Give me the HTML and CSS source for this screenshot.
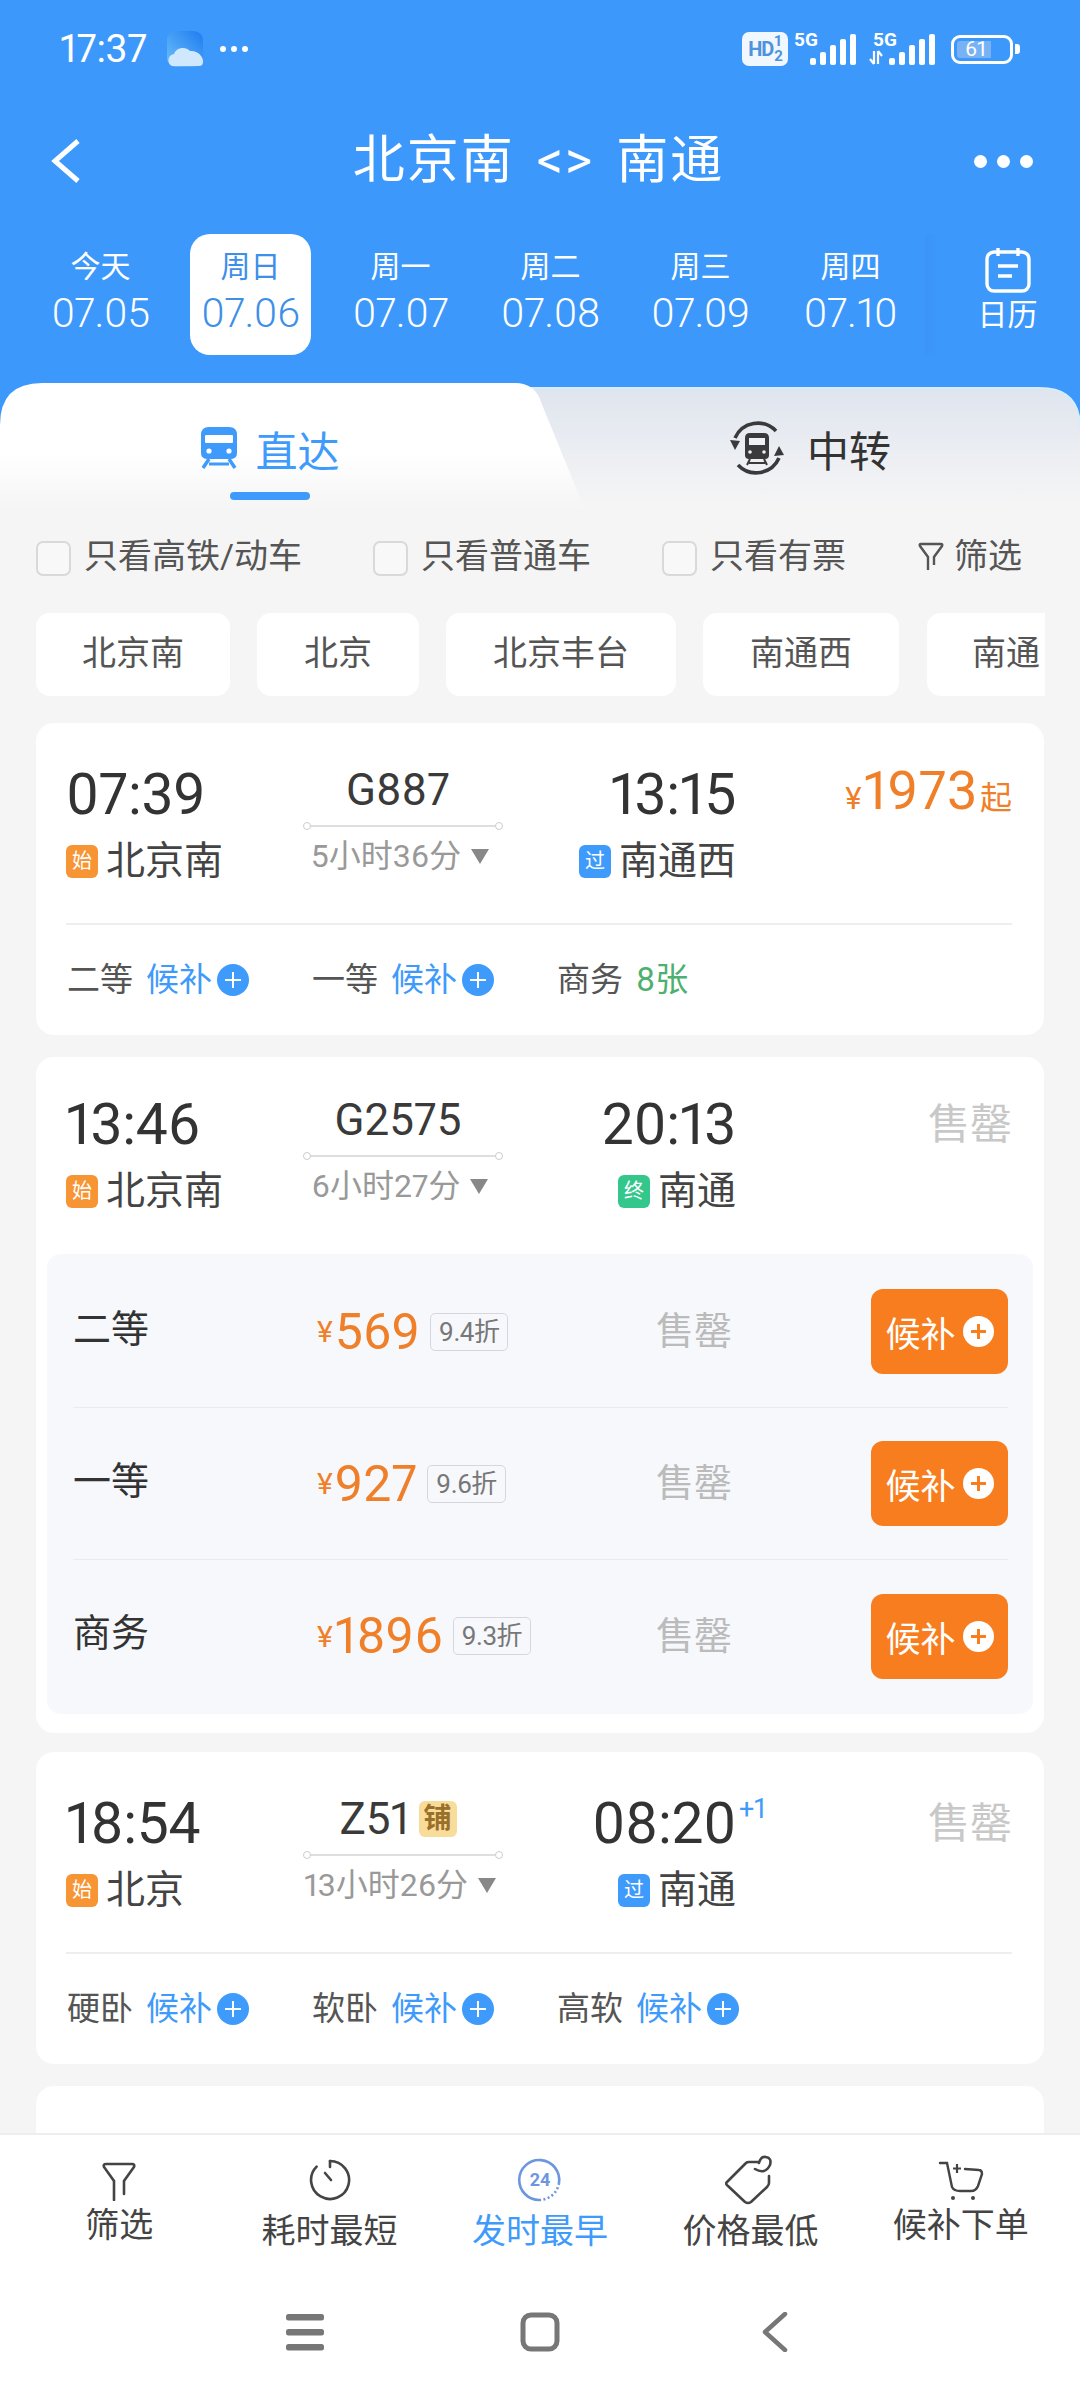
FILE: index.html
```html
<!DOCTYPE html>
<html lang="zh-CN">
<head>
<meta charset="utf-8">
<title>北京南 &lt;&gt; 南通</title>
<link rel="stylesheet" href="styles.css">
</head>
<body>
<div class="app">
  <header class="header">
    <div class="status">
      <span class="clock">17:37</span>
      <svg class="weather" viewBox="0 0 36 36" width="36" height="36">
        <defs><linearGradient id="wg" x1="1" y1="0" x2="0" y2="1"><stop offset="0" stop-color="#1e7cf0"/><stop offset="1" stop-color="#6cc0fa"/></linearGradient></defs>
        <rect width="36" height="36" rx="9" fill="url(#wg)"/>
        <path d="M5 35C0 33 0 24 7 23C9 16 19 15 23 20C30 19 36 25 36 30V31Q36 35 32 35Z" fill="#cfe8fd"/>
      </svg>
      <span class="more-dots"><i></i><i></i><i></i></span>
      <span class="status-right">
        <span class="hd"><b>HD</b><span class="hd-frac"><b>1</b><b>2</b></span></span>
        <svg class="signal" viewBox="0 -8 64 44" width="64" height="44">
          <text x="0" y="15" class="sig-text">5G</text>
          <rect x="16" y="27" width="6" height="7" rx="2" fill="#fff"/><rect x="26" y="21" width="6" height="13" rx="2" fill="#fff"/><rect x="36" y="14" width="6" height="20" rx="2" fill="#fff"/><rect x="46" y="8" width="6" height="26" rx="2" fill="#fff"/><rect x="56" y="3" width="6" height="31" rx="2" fill="#fff"/>
        </svg>
        <svg class="signal signal-two" viewBox="0 -8 68 44" width="68" height="44">
          <text x="4" y="15" class="sig-text">5G</text>
          <path d="M5 20V33M1 28L5 33M9 20V33M9 20L13 25" stroke="#fff" stroke-width="2.2" fill="none"/>
          <rect x="20" y="27" width="6" height="7" rx="2" fill="#fff"/><rect x="30" y="21" width="6" height="13" rx="2" fill="#fff"/><rect x="40" y="14" width="6" height="20" rx="2" fill="#fff"/><rect x="50" y="8" width="6" height="26" rx="2" fill="#fff"/><rect x="60" y="3" width="6" height="31" rx="2" fill="#fff"/>
        </svg>
        <span class="battery"><span class="battery-level">61</span></span><span class="battery-nub"></span>
      </span>
    </div>
    <div class="titlebar">
      <svg class="back" viewBox="0 0 30 44" width="30" height="44"><path d="M27 2L4 22L27 42" fill="none" stroke="#fff" stroke-width="5"/></svg>
      <h1 class="title">北京南 &lt;&gt; 南通</h1>
      <span class="title-more"><i></i><i></i><i></i></span>
    </div>
    <div class="dates">
      <div class="date"><span class="date-w">今天</span><span class="date-d">07.05</span></div>
      <div class="date date-on"><span class="date-w">周日</span><span class="date-d">07.06</span></div>
      <div class="date"><span class="date-w">周一</span><span class="date-d">07.07</span></div>
      <div class="date"><span class="date-w">周二</span><span class="date-d">07.08</span></div>
      <div class="date"><span class="date-w">周三</span><span class="date-d">07.09</span></div>
      <div class="date"><span class="date-w">周四</span><span class="date-d">07.10</span></div>
      <div class="cal">
        <svg viewBox="0 0 46 46" width="46" height="46"><rect x="2" y="5" width="42" height="39" rx="7" fill="none" stroke="#fff" stroke-width="3.4"/><path d="M13 1V9M33 1V9" stroke="#fff" stroke-width="3.4"/><path d="M13 19H33M13 29H27" stroke="#fff" stroke-width="3.4"/></svg>
        <span class="cal-label">日历</span>
      </div>
    </div>
  </header>

  <div class="tabs">
    <svg class="tabs-bg" viewBox="0 0 1080 130" width="1080" height="130">
      <defs>
        <linearGradient id="tl" x1="0" y1="0" x2="0" y2="1"><stop offset=".55" stop-color="#fff"/><stop offset=".95" stop-color="#f6f6f7"/></linearGradient>
        <linearGradient id="tr" x1="0" y1="0" x2="0" y2="1"><stop offset="0" stop-color="#dfe5ee"/><stop offset=".95" stop-color="#f5f5f6"/></linearGradient>
      </defs>
      <rect width="1080" height="50" fill="#3d98fc"/>
      <path d="M500 8H1040Q1080 8 1080 48V130H500Z" fill="url(#tr)"/>
      <path d="M500 8H1040Q1080 8 1080 48" fill="none" stroke="#d5ecfb" stroke-width="2"/>
      <path d="M0 130V45Q0 3 42 3H515Q535 3 541 22L585 130Z" fill="url(#tl)"/>
    </svg>
    <div class="tab tab-on">
      <div class="tab-main">
        <svg viewBox="0 0 38 42" width="38" height="42"><path d="M9 0H29Q37 0 37 8V26Q37 32 30 32H8Q1 32 1 26V8Q1 0 9 0Z" fill="#3f9bfb"/><rect x="5" y="8" width="28" height="8" rx="1" fill="#fff"/><circle cx="9" cy="24" r="2.6" fill="#fff"/><circle cx="29" cy="24" r="2.6" fill="#fff"/><path d="M9 32L3 41M29 32L35 41" stroke="#3f9bfb" stroke-width="3.5"/><path d="M9 37H29" stroke="#3f9bfb" stroke-width="3"/></svg>
        <span>直达</span>
      </div>
      <i class="tab-bar"></i>
    </div>
    <div class="tab">
      <div class="tab-main tab-main-gap">
        <svg viewBox="0 0 56 56" width="56" height="56"><path d="M6 18A25 25 0 0 1 47 11" fill="none" stroke="#3a3a3c" stroke-width="3.6"/><path d="M50 38A25 25 0 0 1 9 45" fill="none" stroke="#3a3a3c" stroke-width="3.6"/><path d="M1 20L6 30L11 21Z" fill="#3a3a3c"/><path d="M45 36L50 26L55 35Z" fill="#3a3a3c"/><path d="M21 13H35Q40 13 40 18V35Q40 39 36 39H20Q16 39 16 35V18Q16 13 21 13Z" fill="#3a3a3c"/><rect x="20" y="18" width="16" height="7" fill="#eef1f5"/><circle cx="21" cy="32" r="1.8" fill="#eef1f5"/><circle cx="35" cy="32" r="1.8" fill="#eef1f5"/><path d="M21 39L18 45M35 39L38 45M20 43H36" stroke="#3a3a3c" stroke-width="2"/></svg>
        <span class="tab-dark">中转</span>
      </div>
      <i class="tab-bar tab-bar-off"></i>
    </div>
  </div>

  <div class="filters">
    <label class="check"><i class="box"></i>只看高铁/动车</label>
    <label class="check"><i class="box"></i>只看普通车</label>
    <label class="check"><i class="box"></i>只看有票</label>
    <span class="filter-btn"><svg viewBox="0 0 28 30" width="28" height="30"><path d="M11 29V16L3 5Q2 3 4 3H24Q26 3 25 5L17 16V24" fill="none" stroke="#555" stroke-width="2.4"/></svg>筛选</span>
  </div>

  <div class="chips">
    <span class="chip">北京南</span><span class="chip">北京</span><span class="chip">北京丰台</span><span class="chip">南通西</span><span class="chip">南通</span>
  </div>

  <main class="list">
    <section class="card">
      <div class="trip">
        <div class="col-dep"><div class="time">07:39</div><div class="station"><i class="st st-o">始</i>北京南</div></div>
        <div class="col-mid"><div class="no">G887</div><div class="rail"><i></i></div><div class="dur">5小时36分<i class="tri"></i></div></div>
        <div class="col-arr"><div class="time">13:15</div><div class="station"><i class="st st-b">过</i>南通西</div></div>
        <div class="col-price"><span class="yen">¥</span><span class="amt amt-big">1973</span><span class="qi">起</span></div>
      </div>
      <div class="seats">
        <div class="seat">二等<span class="wait">候补</span><i class="plus"></i></div>
        <div class="seat">一等<span class="wait">候补</span><i class="plus"></i></div>
        <div class="seat">商务<span class="left">8张</span></div>
      </div>
    </section>

    <section class="card card-open">
      <div class="trip trip-open">
        <div class="col-dep"><div class="time">13:46</div><div class="station"><i class="st st-o">始</i>北京南</div></div>
        <div class="col-mid"><div class="no">G2575</div><div class="rail"><i></i></div><div class="dur">6小时27分<i class="tri"></i></div></div>
        <div class="col-arr"><div class="time">20:13</div><div class="station"><i class="st st-g">终</i>南通</div></div>
        <div class="col-price"><span class="sold">售罄</span></div>
      </div>
      <div class="panel">
        <div class="prow"><span class="pclass">二等</span><span class="pprice"><span class="pyen">¥</span><span class="amt">569</span><span class="disc">9.4折</span></span><span class="psold">售罄</span><span class="btn">候补<i class="plus plus-w"></i></span></div>
        <div class="prow"><span class="pclass">一等</span><span class="pprice"><span class="pyen">¥</span><span class="amt">927</span><span class="disc">9.6折</span></span><span class="psold">售罄</span><span class="btn">候补<i class="plus plus-w"></i></span></div>
        <div class="prow"><span class="pclass">商务</span><span class="pprice"><span class="pyen">¥</span><span class="amt">1896</span><span class="disc">9.3折</span></span><span class="psold">售罄</span><span class="btn">候补<i class="plus plus-w"></i></span></div>
      </div>
    </section>

    <section class="card">
      <div class="trip">
        <div class="col-dep"><div class="time">18:54</div><div class="station"><i class="st st-o">始</i>北京</div></div>
        <div class="col-mid"><div class="no">Z51<i class="pu">铺</i></div><div class="rail"><i></i></div><div class="dur">13小时26分<i class="tri"></i></div></div>
        <div class="col-arr"><div class="time">08:20<sup class="plus-day">+1</sup></div><div class="station"><i class="st st-b">过</i>南通</div></div>
        <div class="col-price"><span class="sold">售罄</span></div>
      </div>
      <div class="seats">
        <div class="seat">硬卧<span class="wait">候补</span><i class="plus"></i></div>
        <div class="seat">软卧<span class="wait">候补</span><i class="plus"></i></div>
        <div class="seat">高软<span class="wait">候补</span><i class="plus"></i></div>
      </div>
    </section>

    <section class="card"></section>
  </main>

  <nav class="tabbar">
    <div class="nav nav-up">
      <span class="nav-ic"><svg viewBox="0 0 36 42" width="36" height="42"><path d="M13 41V22L3 8Q2 5 5 5H31Q34 5 33 8L23 22V35" fill="none" stroke="#444" stroke-width="2.6" stroke-linecap="round"/></svg></span>
      <span class="nav-t">筛选</span>
    </div>
    <div class="nav">
      <span class="nav-ic"><svg viewBox="0 0 44 44" width="44" height="44"><path d="M22 3A19 19 0 1 1 8.6 8.6" fill="none" stroke="#444" stroke-width="2.6" stroke-linecap="round"/><path d="M22 3V9M17 15L23 22" stroke="#444" stroke-width="2.6" stroke-linecap="round"/></svg></span>
      <span class="nav-t">耗时最短</span>
    </div>
    <div class="nav nav-on">
      <span class="nav-ic"><svg viewBox="0 0 46 46" width="46" height="46"><path d="M42 26A20 20 0 1 0 23 43" fill="none" stroke="#6c96e0" stroke-width="2.6"/><path d="M42 26A20 20 0 0 1 23 43" fill="none" stroke="#6c96e0" stroke-width="2.6" stroke-dasharray="2 2.4"/><text x="23" y="29" class="ic24">24</text></svg></span>
      <span class="nav-t">发时最早</span>
    </div>
    <div class="nav">
      <span class="nav-ic"><svg viewBox="0 0 50 50" width="50" height="50"><path d="M33 7H24Q22 7 21 8L2 27Q0 29 3 31L20 47Q23 49 26 47L42 32Q44 30 44 28V21" fill="none" stroke="#444" stroke-width="2.6" stroke-linecap="round" stroke-linejoin="round"/><path d="M30 14Q40 20 45 10Q47 3 41 2Q36 1 34 8" fill="none" stroke="#444" stroke-width="2.6" stroke-linecap="round"/></svg></span>
      <span class="nav-t">价格最低</span>
    </div>
    <div class="nav nav-up">
      <span class="nav-ic"><svg viewBox="0 0 46 40" width="46" height="40"><path d="M2 3H9L14 27Q16 31 22 31H33Q38 31 40 26L44 14Q44 10 41 10L27 9" fill="none" stroke="#444" stroke-width="2.4" stroke-linecap="round"/><path d="M19 4V13M15 8.500H23" stroke="#444" stroke-width="2.2"/><circle cx="15" cy="38" r="2" fill="#444"/><circle cx="35" cy="38" r="2" fill="#444"/></svg></span>
      <span class="nav-t">候补下单</span>
    </div>
  </nav>

  <div class="sysnav">
    <svg viewBox="0 0 38 38" width="38" height="38"><rect y="1" width="38" height="6.500" rx="2.500" fill="#777"/><rect y="16" width="38" height="6.500" rx="2.500" fill="#777"/><rect y="31" width="38" height="6.500" rx="2.500" fill="#777"/></svg>
    <svg viewBox="0 0 40 40" width="40" height="40"><rect x="3" y="3" width="34" height="34" rx="8" fill="none" stroke="#777" stroke-width="5"/></svg>
    <svg viewBox="0 0 26 40" width="26" height="40"><path d="M23 2L3 20L23 38" fill="none" stroke="#777" stroke-width="4.500" stroke-linecap="round" stroke-linejoin="round"/></svg>
  </div>
</div>
</body>
</html>
```

FILE: styles.css
```css
* { box-sizing: border-box; }
html, body { margin: 0; padding: 0; }
body {
  width: 1080px;
  height: 2400px;
  overflow: hidden;
  background: #f5f5f6;
  color: #333;
  font-family: Roboto, "Noto Sans CJK SC", sans-serif;
  font-weight: 400;
  font-variant-numeric: proportional-nums;
}
i { font-style: normal; }
.app { width: 1080px; height: 2400px; display: flex; flex-direction: column; overflow: hidden; }

/* header */
.header { background: #3d98fc; color: #fff; height: 380px; flex: none; }
.status { height: 80px; padding: 18px 60px 0; display: flex; align-items: center; }
.clock { font-size: 39px; font-weight: 400; width: 107px; letter-spacing: -.3px; }
.weather { display: block; }
.more-dots { display: flex; gap: 5px; margin-left: 17px; }
.more-dots i { width: 6px; height: 6px; border-radius: 50%; background: #fff; }
.status-right { margin-left: auto; display: flex; align-items: center; }
.hd { width: 46px; height: 34px; background: #f1f7ff; border-radius: 7px; color: #4e93dc; display: flex; align-items: center; justify-content: center; font-size: 20px; line-height: 1; }
.hd b { font-weight: 700; letter-spacing: -1px; }
.hd-frac { display: flex; flex-direction: column; font-size: 15px; line-height: 15px; margin-left: 1px; }
.signal { margin: -8px 0 0 6px; display: block; }
.signal-two { margin-left: 11px; }
.sig-text { fill: #fff; font: 700 19px Roboto, sans-serif; }
.battery { width: 62px; height: 29px; margin-left: 14px; border: 3px solid #fff; border-radius: 9px; padding: 3px; display: flex; }
.battery-level { width: 34px; height: 17px; background: #78b2f5; border-radius: 3px 0 0 3px; font-size: 21px; line-height: 17px; white-space: nowrap; padding-left: 8px; }
.battery-nub { width: 5px; height: 10px; margin-left: 2px; background: #fff; border-radius: 0 3px 3px 0; }

.titlebar { height: 70px; margin-top: 45px; padding: 2px 47px 0 51px; display: flex; align-items: center; justify-content: space-between; }
.back { display: block; }
.title { margin: 0 0 0 22px; font-size: 52px; line-height: 68px; font-weight: 400; letter-spacing: 2px; word-spacing: 7px; }
.title-more { display: flex; gap: 10px; }
.title-more i { width: 13px; height: 13px; background: #fff; border-radius: 50%; }

.dates { margin-top: 39px; padding-left: 40px; display: flex; gap: 29px; height: 121px; }
.date { width: 121px; height: 121px; border-radius: 20px; padding-top: 15px; display: flex; flex-direction: column; align-items: center; flex: none; }
.date-on { background: #fff; color: #3d8fe8; }
.date-w { font-size: 30px; line-height: 36px; }
.date-d { font-size: 41px; line-height: 52px; font-weight: 300; margin-top: 2px; letter-spacing: -.4px; }
.cal { margin-left: -15px; flex: 1; display: flex; flex-direction: column; align-items: center; padding: 13px 0 0 10px; background: linear-gradient(to right, rgba(45,105,185,.08), rgba(61,152,252,0) 14px); }
.cal svg { display: block; }
.cal-label { font-size: 30px; line-height: 38px; margin-top: 3px; }

/* tabs */
.tabs { position: relative; height: 130px; display: flex; flex: none; }
.tabs-bg { position: absolute; left: 0; top: 0; display: block; }
.tab { position: relative; width: 540px; display: flex; flex-direction: column; align-items: center; padding-top: 43px; }
.tab-main { display: flex; align-items: center; height: 50px; gap: 17px; font-size: 42px; color: #3f9bfb; }
.tab-main svg { display: block; }
.tab-main-gap { gap: 22px; }
.tab-dark { color: #333; }
.tab-bar { width: 80px; height: 8px; margin-top: 19px; border-radius: 4px; background: #3f9bfb; }
.tab-bar-off { background: transparent; }

/* filters */
.filters { padding: 28px 0 0 36px; height: 64px; display: flex; gap: 71px; font-size: 34px; line-height: 36px; color: #555; flex: none; }
.check { display: flex; align-items: center; gap: 13px; white-space: nowrap; }
.box { width: 35px; height: 35px; border: 2px solid #d9d9db; border-radius: 7px; background: #f8f8f8; margin-top: 4px; }
.filter-btn { display: flex; align-items: center; gap: 9px; font-size: 34px; }
.filter-btn svg { display: block; }

.chips { margin: 39px 35px 0 36px; height: 83px; display: flex; gap: 27px; overflow: hidden; flex: none; }
.chip { flex: none; height: 83px; padding: 0 47px; background: #fff; border-radius: 14px; font-size: 34px; line-height: 80px; color: #555; }
.chip:first-child { padding: 0 46px; }
.chip:last-child { padding: 0 45px; margin-left: 1px; }

/* cards */
.list { flex: 1; min-height: 0; margin-top: 27px; padding: 0 36px; overflow: hidden; }
.card { background: #fff; border-radius: 18px; padding: 0 32px 30px 30px; margin-bottom: 22px; min-height: 312px; }
.card-open { padding-bottom: 19px; margin-bottom: 19px; }
.trip { display: flex; padding-top: 42px; }
.trip-open { padding-top: 38px; }
.col-dep { width: 237px; flex: none; }
.col-mid { width: 200px; flex: none; display: flex; flex-direction: column; align-items: center; }
.col-arr { width: 233px; flex: none; display: flex; flex-direction: column; align-items: flex-end; }
.col-price { flex: 1; display: flex; justify-content: flex-end; align-items: baseline; height: 56px; color: #ef7f28; }
.time { font-size: 57px; line-height: 60px; color: #333; position: relative; letter-spacing: -.3px; }
.station { display: flex; align-items: center; height: 44px; margin-top: 14px; padding-bottom: 8px; font-size: 39px; color: #444; }
.st { width: 32px; height: 33px; margin: 8px 8px 0 0; border-radius: 6px; color: #fff; font-size: 20px; line-height: 33px; text-align: center; }
.st-o { background: #f79433; }
.st-b { background: #3f9bfb; }
.st-g { background: #34c78c; }
.no { font-size: 44px; line-height: 50px; color: #3a3a3a; margin-right: 10px; display: flex; align-items: center; }
.pu { width: 38px; height: 36px; margin-left: 9px; background: #f7dc9a; border-radius: 6px; font-size: 28px; line-height: 36px; text-align: center; color: #9a6f2a; font-weight: 700; }
.rail { width: 200px; height: 6px; margin-top: 8px; display: flex; align-items: center; }
.rail::before, .rail::after { content: ""; width: 6px; height: 6px; flex: none; border: 1px solid #ccc; border-radius: 50%; }
.rail i { flex: 1; height: 2px; background: #dedede; }
.dur { display: flex; align-items: center; margin-top: 7px; margin-right: 6px; font-size: 32px; line-height: 40px; color: #999; white-space: nowrap; }
.tri { margin-left: 10px; width: 0; height: 0; border-left: 9px solid transparent; border-right: 9px solid transparent; border-top: 15px solid #888; }
.yen { font-size: 31px; margin-right: 2px; }
.amt { font-size: 50px; }
.amt-big { font-size: 54px; line-height: 52px; letter-spacing: .5px; }
.qi { font-size: 32px; margin-left: 2px; }
.sold { font-size: 42px; line-height: 60px; color: #c8c8c8; }
.plus-day { position: absolute; left: 100%; top: 0; margin-left: 3px; font-size: 27px; line-height: 30px; color: #3f9bfb; }
.seats { margin-top: 40px; padding-top: 30px; border-top: 2px solid #eeeeee; display: flex; height: 82px; font-size: 33px; line-height: 50px; color: #555; }
.seat { width: 245px; display: flex; align-items: center; flex: none; padding-left: 1px; }
.wait { color: #3f9bfb; margin-left: 13px; }
.left { color: #4db06f; margin-left: 13px; }
.plus { width: 32px; height: 32px; margin-left: 5px; border-radius: 50%; background: linear-gradient(#fff, #fff) center / 16px 2px no-repeat, linear-gradient(#fff, #fff) center / 2px 16px no-repeat, #3f9bfb; }
.plus-w { width: 31px; height: 31px; margin-left: 7px; background: linear-gradient(#f87d1e, #f87d1e) center / 15px 3px no-repeat, linear-gradient(#f87d1e, #f87d1e) center / 3px 15px no-repeat, #fff; }

.panel { margin: 41px -21px 0 -19px; padding: 2px 25px 2px 26px; background: #f6f8fb; border-radius: 14px; }
.prow { height: 152px; display: flex; align-items: center; border-bottom: 1px solid #e9ebf0; }
.prow:last-child { border-bottom: 0; }
.pclass { width: 244px; font-size: 38px; color: #333; margin-top: -13px; }
.pprice { width: 339px; display: flex; align-items: center; color: #ef7f28; }
.pyen { font-size: 30px; margin-right: 2px; }
.disc { height: 38px; margin-left: 10px; padding: 0 8px; border: 1px solid #d5d7dc; border-radius: 5px; font-size: 26px; line-height: 36px; color: #777; letter-spacing: -.5px; }
.psold { flex: 1; font-size: 38px; color: #bbb; margin-top: -8px; }
.btn { width: 137px; height: 85px; background: #f87d1e; border-radius: 12px; color: #fff; font-size: 35px; display: flex; align-items: center; justify-content: center; }

/* bottom */
.tabbar { flex: none; height: 118px; background: #fff; border-top: 2px solid #eeeeee; padding: 0 14px; display: flex; }
.nav { flex: 1; display: flex; flex-direction: column; align-items: center; padding-top: 20px; color: #444; }
.nav-ic { height: 50px; display: flex; align-items: center; justify-content: center; }
.nav-ic svg { display: block; }
.nav-t { font-size: 34px; line-height: 40px; margin-top: 6px; }
.nav-up .nav-t { margin-top: 0; }
.nav-on { color: #3f9bfb; }
.ic24 { font: 700 18px Roboto, sans-serif; fill: #6c96e0; text-anchor: middle; }
.sysnav { flex: none; height: 149px; background: #fff; display: grid; grid-template-columns: repeat(3, 235px); padding: 12px 0 0 187px; align-items: center; justify-items: center; }
.sysnav svg { display: block; }
```
